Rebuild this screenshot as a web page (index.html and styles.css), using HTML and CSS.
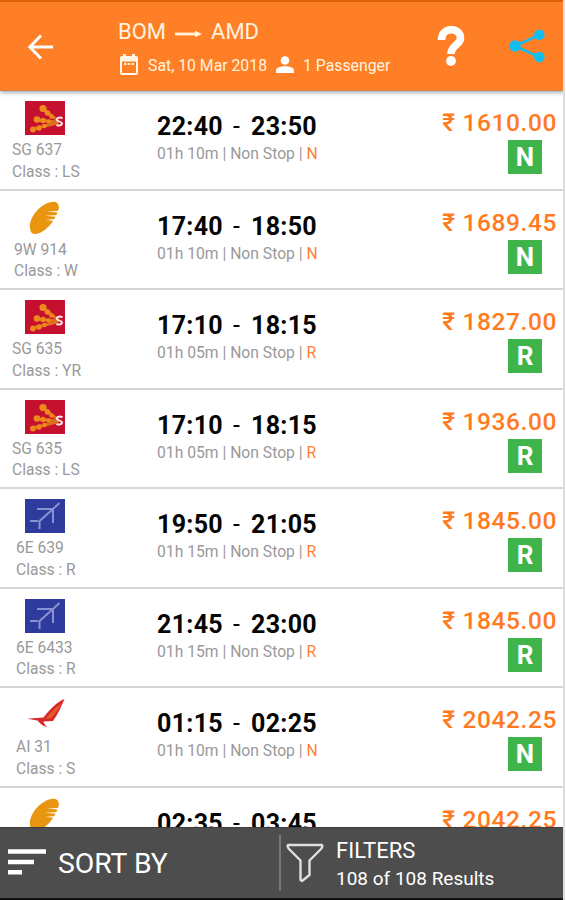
FILE: index.html
```
<!DOCTYPE html>
<html lang="en">
<head>
<meta charset="utf-8">
<title>BOM to AMD flights</title>
<link rel="stylesheet" href="styles.css">
</head>
<body>
<svg class="sprite" aria-hidden="true">
  <defs>
    <symbol id="spice" viewBox="0 0 40 34">
      <rect width="40" height="34" fill="#c5102f"/>
      <g stroke="#dd701c" stroke-linecap="round" fill="none">
        <path d="M18 8L32 19" stroke-width="3"/><path d="M12 19L32 21" stroke-width="3"/><path d="M8 28L32 22" stroke-width="3"/>
      </g>
      <g fill="#ee8a1c"><circle cx="18" cy="7.500" r="3.600"/><circle cx="22.500" cy="12" r="2.800"/><circle cx="26.500" cy="15.500" r="2.300"/><circle cx="12" cy="18.500" r="3.300"/><circle cx="18" cy="19.500" r="2.800"/><circle cx="23.500" cy="20.500" r="2.300"/><circle cx="8" cy="28.500" r="2.900"/><circle cx="14" cy="27" r="2.700"/><circle cx="19.500" cy="25" r="2.300"/></g>
      <path d="M37.500 17.200C34 15.800 31.500 17 32 19C32.500 21 37.500 20.400 37 22.800C36.500 25 33 24.800 31.500 23.800" fill="none" stroke="#ffe5e5" stroke-width="2"/>
    </symbol>
    <symbol id="jet" viewBox="0 0 40 34">
      <path d="M5 27C3.500 17 15 2 28 .7C32 .3 34 3 33.800 7C31 20 19 33 10 33C7 33 5.300 31 5 27Z" fill="#e8950f"/>
      <g fill="#fff"><path d="M36 9.800L22 10.500L35 11.700Z"/><path d="M35 13.900L20 14.800L33 15.900Z"/><path d="M32.500 18L21 18.800L30 20.200Z"/></g>
    </symbol>
    <symbol id="indigo" viewBox="0 0 40 34">
      <rect width="40" height="34" fill="#2e3a9c"/>
      <path d="M12 10H28L34.500 4M28 10V24M28 10L14.500 22V30M5 22H13" fill="none" stroke="#8993d2" stroke-width="2"/>
    </symbol>
    <symbol id="air" viewBox="0 0 40 34">
      <path d="M39.500 1C33 3 24 12 18.500 19.500L2 20.700L12.500 22.500C15 25 17 28 22.500 29C19.500 27 18.500 25 18.500 23.500L28 23C33 16 36 9 39.500 1Z" fill="#da2828"/>
      <path d="M37 5C31 9 24 16 21 21L26 20C30 16 34 10 37 5Z" fill="#e65a30"/>
    </symbol>
  </defs>
</svg>
<div class="app">
  <header class="topbar">
    <svg class="back" viewBox="0 0 26 26"><path d="M25 13H2M13 1.500L1.800 13L13 24.500" fill="none" stroke="#fff" stroke-width="3"/></svg>
    <div class="trip">
      <div class="route"><span>BOM</span><svg class="arrow" viewBox="0 0 27 8"><path d="M0 4H24" stroke="#fff3dc" stroke-width="2.800"/><path d="M20 .8L27 4L20 7.200Z" fill="#fff3dc"/></svg><span>AMD</span></div>
      <div class="details">
        <svg class="calendar" viewBox="0 0 18 21"><path fill-rule="evenodd" d="M2 2H3V0H6V2H12V0H15V2H16Q18 2 18 4V19Q18 21 16 21H2Q0 21 0 19V4Q0 2 2 2ZM2 7.500V19H16V7.500ZM4 9H6.500V11H4ZM7.800 9H10.200V11H7.800ZM11.500 9H14V11H11.500Z" fill="#fff5e4"/></svg>
        <span class="date">Sat, 10 Mar 2018</span>
        <svg class="person" viewBox="0 0 18 17"><circle cx="9" cy="4.500" r="4.300" fill="#fff"/><path d="M0 17V14.500C0 11.500 5 10.300 9 10.300S18 11.500 18 14.500V17Z" fill="#fff"/></svg>
        <span class="pax">1 Passenger</span>
      </div>
    </div>
    <svg class="help" viewBox="0 0 28 40"><path d="M4.500 14C4.500 0 23.500 1 23.500 12C23.500 19 14 19 14 28" fill="none" stroke="#fff" stroke-width="7.600"/><circle cx="14" cy="35" r="4.900" fill="#fff"/></svg>
    <svg class="share" viewBox="0 0 36 34"><path d="M30 6L6 17L30 28" fill="none" stroke="#12bdf0" stroke-width="2.600"/><g fill="#12bdf0"><circle cx="6" cy="17" r="5.800"/><circle cx="30.300" cy="5.800" r="5.300"/><circle cx="30.300" cy="28" r="5.300"/></g></svg>
  </header>
  <main class="flights">
    <article class="flight">
      <div class="carrier"><svg class="logo"><use href="#spice"/></svg><div class="code">SG 637<br>Class : LS</div></div>
      <div class="schedule"><div class="times"><b>22:40</b><i>-</i><b>23:50</b></div><div class="info">01h 10m | Non Stop | <em>N</em></div></div>
      <div class="fare"><div class="price">₹ 1610.00</div><div class="tag">N</div></div>
    </article>
    <article class="flight">
      <div class="carrier"><svg class="logo"><use href="#jet"/></svg><div class="code jet">9W 914<br>Class : W</div></div>
      <div class="schedule"><div class="times"><b>17:40</b><i>-</i><b>18:50</b></div><div class="info">01h 10m | Non Stop | <em>N</em></div></div>
      <div class="fare"><div class="price">₹ 1689.45</div><div class="tag">N</div></div>
    </article>
    <article class="flight">
      <div class="carrier"><svg class="logo"><use href="#spice"/></svg><div class="code">SG 635<br>Class : YR</div></div>
      <div class="schedule"><div class="times"><b>17:10</b><i>-</i><b>18:15</b></div><div class="info">01h 05m | Non Stop | <em>R</em></div></div>
      <div class="fare"><div class="price">₹ 1827.00</div><div class="tag">R</div></div>
    </article>
    <article class="flight">
      <div class="carrier"><svg class="logo"><use href="#spice"/></svg><div class="code">SG 635<br>Class : LS</div></div>
      <div class="schedule"><div class="times"><b>17:10</b><i>-</i><b>18:15</b></div><div class="info">01h 05m | Non Stop | <em>R</em></div></div>
      <div class="fare"><div class="price">₹ 1936.00</div><div class="tag">R</div></div>
    </article>
    <article class="flight">
      <div class="carrier"><svg class="logo"><use href="#indigo"/></svg><div class="code narrow">6E 639<br>Class : R</div></div>
      <div class="schedule"><div class="times"><b>19:50</b><i>-</i><b>21:05</b></div><div class="info">01h 15m | Non Stop | <em>R</em></div></div>
      <div class="fare"><div class="price">₹ 1845.00</div><div class="tag">R</div></div>
    </article>
    <article class="flight">
      <div class="carrier"><svg class="logo"><use href="#indigo"/></svg><div class="code narrow">6E 6433<br>Class : R</div></div>
      <div class="schedule"><div class="times"><b>21:45</b><i>-</i><b>23:00</b></div><div class="info">01h 15m | Non Stop | <em>R</em></div></div>
      <div class="fare"><div class="price">₹ 1845.00</div><div class="tag">R</div></div>
    </article>
    <article class="flight">
      <div class="carrier"><svg class="logo"><use href="#air"/></svg><div class="code narrow">AI 31<br>Class : S</div></div>
      <div class="schedule"><div class="times"><b>01:15</b><i>-</i><b>02:25</b></div><div class="info">01h 10m | Non Stop | <em>N</em></div></div>
      <div class="fare"><div class="price">₹ 2042.25</div><div class="tag">N</div></div>
    </article>
    <article class="flight">
      <div class="carrier"><svg class="logo"><use href="#jet"/></svg></div>
      <div class="schedule"><div class="times"><b>02:35</b><i>-</i><b>03:45</b></div></div>
      <div class="fare"><div class="price">₹ 2042.25</div></div>
    </article>
  </main>
  <footer class="bottombar">
    <div class="sort"><svg class="bars" viewBox="0 0 38 26"><path d="M0 2.500H38M0 13H26M0 23.300H14" stroke="#fff" stroke-width="4.400"/></svg><span>SORT BY</span></div>
    <div class="filters"><svg class="funnel" viewBox="0 0 38 40"><path d="M2 2H36Q37 4 35 6L23.500 17.500V32L16 38L14.500 37V17.500L3 6Q1 4 2 2Z" fill="none" stroke="#e0e0e0" stroke-width="2.400" stroke-linejoin="round"/></svg><div><div class="label">FILTERS</div><div class="count">108 of 108 Results</div></div></div>
  </footer>
</div>
</body>
</html>
```
FILE: styles.css
```
* { box-sizing: border-box; }
body { margin: 0; background: #fff; font-family: Roboto, "Liberation Sans", sans-serif; }
.sprite { position: absolute; width: 0; height: 0; }
svg { display: block; flex: none; }
.app { width: 565px; height: 900px; display: flex; flex-direction: column; overflow: hidden; border-right: 2px solid #dedede; white-space: nowrap; }
.topbar { height: 91px; flex: none; display: flex; margin-right: -1px; background: #ff7f27; border-top: 2px solid #df610b; border-bottom: 1px solid #d08545; box-shadow: 0 1px 5px #8494a0; z-index: 1; color: #fff3df; }
.back { width: 26px; height: 26px; margin: 32px 0 0 28px; }
.trip { width: 318px; margin-left: 64px; padding-top: 15px; }
.route { display: flex; align-items: center; height: 29px; font-size: 22px; }
.arrow { width: 27px; height: 8px; margin: 5px 9px 0 9px; }
.details { display: flex; align-items: center; height: 24px; margin-top: 7px; font-size: 15.800px; }
.calendar { width: 18px; height: 21px; margin: 0 10px 2px 2px; }
.date { width: 119px; }
.person { width: 18px; height: 17px; margin: 0 9px 2px 9px; }
.help { width: 28px; height: 40px; margin: 24px 0 0 1px; }
.share { width: 36px; height: 34px; margin: 27px 0 0 44px; }
.flights { flex: 1; min-height: 0; overflow: hidden; }
.flight { height: 99.500px; display: flex; border-bottom: 2px solid #d6d6d6; }
.carrier { width: 157px; padding: 10px 0 0 12px; }
.logo { width: 40px; height: 34px; margin-left: 13px; }
.code { margin-top: 5px; font-size: 15.600px; line-height: 21.500px; color: #999; }
.code.jet { padding-left: 2px; }
.code.narrow { padding-left: 4px; }
.schedule { width: 240px; padding-top: 20px; }
.times { display: flex; height: 32px; line-height: 32px; font-size: 25px; letter-spacing: .3px; color: #050505; }
.times b { width: 66px; font-weight: 700; }
.times i { width: 28px; padding-left: 10px; font-style: normal; font-weight: 400; }
.info { height: 22px; line-height: 22px; font-size: 15.700px; color: #999; }
.info em { font-style: normal; color: #ff7f32; }
.fare { flex: 1; padding: 16px 6px 0 0; display: flex; flex-direction: column; align-items: flex-end; }
.price { height: 32px; line-height: 32px; font-size: 24.500px; letter-spacing: .6px; font-weight: 500; color: #ff7a20; }
.tag { width: 34px; height: 34px; margin: 1px 15px 0 0; background: #3fb44a; color: #fff; font-size: 26px; font-weight: 700; line-height: 35px; text-align: center; }
.bottombar { height: 73px; flex: none; display: flex; margin-right: -1px; background: #4d4d4d; color: #fff; border-top: 1px solid #3d3d3d; border-bottom: 2px solid #111; }
.sort { width: 279px; display: flex; align-items: center; padding-left: 8px; font-size: 28.300px; }
.bars { width: 38px; height: 26px; margin: 0 12px 3px 0; }
.filters { flex: 1; display: flex; }
.filters::before { content: ""; width: 2px; height: 56px; margin-top: 7px; background: #777; }
.funnel { width: 38px; height: 40px; margin: 15px 12px 0 5px; }
.label { margin-top: 8px; height: 30px; line-height: 29px; font-size: 22px; }
.count { height: 26px; line-height: 26px; font-size: 19px; }
```
